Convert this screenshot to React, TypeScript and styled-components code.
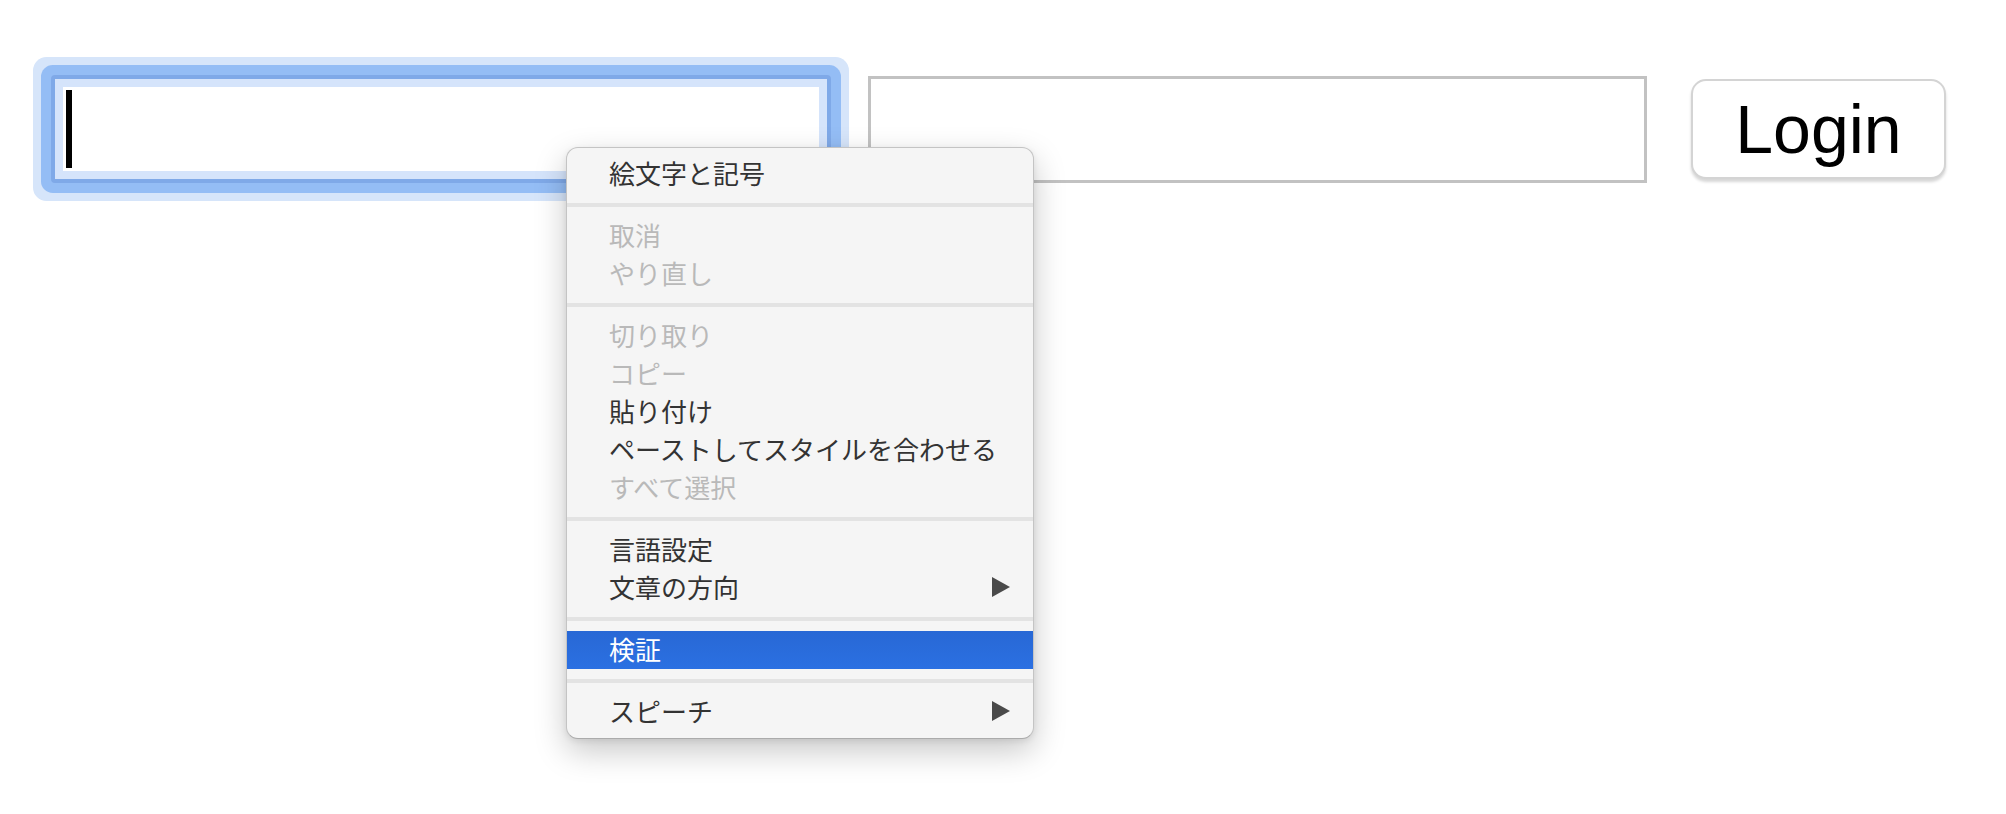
import React from "react";
import styled, { createGlobalStyle, css } from "styled-components";

const GlobalStyle = createGlobalStyle`
  html, body {
    margin: 0;
    padding: 0;
    background: #ffffff;
  }
  body {
    font-family: "Liberation Sans", Arial, sans-serif;
  }
`;

const Page = styled.div`
  position: relative;
  min-height: 814px;
  padding: 75px 0 0 51px;
  box-sizing: border-box;
`;

const FormRow = styled.div`
  display: flex;
  align-items: center;
`;

const Field = styled.div<{ $focused?: boolean }>`
  box-sizing: border-box;
  width: 780px;
  height: 108px;
  background: #ffffff;
  display: flex;
  align-items: center;
  padding: 3px;
  ${(p) =>
    p.$focused
      ? css`
          border: 4px solid #7fa9e8;
          border-radius: 4px;
          padding: 11px;
          box-shadow: inset 0 0 0 8px #d5e4fb, 0 0 0 10px #94bdf5,
            0 0 0 18px #d6e5fa;
        `
      : css`
          border: 3px solid #c2c2c2;
        `}
`;

const SecondField = styled(Field)`
  margin-left: 37px;
  width: 779px;
  height: 107px;
`;

const Caret = styled.span`
  display: block;
  width: 6px;
  height: 78px;
  background: #000000;
`;

const LoginButton = styled.button`
  box-sizing: border-box;
  margin-left: 44px;
  width: 255px;
  height: 100px;
  background: #ffffff;
  border: 2px solid #d4d4d4;
  border-radius: 15px;
  box-shadow: 0 3px 3px rgba(0, 0, 0, 0.16);
  font-family: "Liberation Sans", Arial, sans-serif;
  font-size: 68px;
  color: #000000;
  padding: 0;
  display: flex;
  align-items: center;
  justify-content: center;
  line-height: 1;
`;

const Menu = styled.div`
  position: absolute;
  left: 566px;
  top: 147px;
  width: 468px;
  box-sizing: border-box;
  padding: 7px 0;
  background: #f5f5f5;
  border: 1px solid rgba(0, 0, 0, 0.2);
  border-bottom-color: rgba(0, 0, 0, 0.3);
  border-radius: 12px;
  box-shadow: 0 12px 32px rgba(0, 0, 0, 0.22), 0 2px 6px rgba(0, 0, 0, 0.08);
  font-family: "Noto Sans CJK JP", "Noto Sans", sans-serif;
  font-size: 26px;
  overflow: hidden;
`;

const Item = styled.div<{ $disabled?: boolean; $active?: boolean }>`
  box-sizing: border-box;
  height: 38px;
  display: flex;
  align-items: center;
  justify-content: space-between;
  padding: 0 23px 2px 42px;
  line-height: 36px;
  color: ${(p) => (p.$active ? "#ffffff" : p.$disabled ? "#b9b9b9" : "#333333")};
  background: ${(p) =>
    p.$active ? "linear-gradient(#2868d5, #2b70e2)" : "transparent"};
  white-space: nowrap;
`;

const Separator = styled.div`
  height: 4px;
  margin: 10px 0;
  background: #e3e3e3;
`;

const SubArrow = () => (
  <svg width="18" height="20" viewBox="0 0 18 20" aria-hidden="true">
    <polygon points="0,0 18,10 0,20" fill="#4a4a4a" />
  </svg>
);

type Entry =
  | { kind: "sep" }
  | { kind: "item"; label: string; disabled?: boolean; active?: boolean; sub?: boolean };

const entries: Entry[] = [
  { kind: "item", label: "絵文字と記号" },
  { kind: "sep" },
  { kind: "item", label: "取消", disabled: true },
  { kind: "item", label: "やり直し", disabled: true },
  { kind: "sep" },
  { kind: "item", label: "切り取り", disabled: true },
  { kind: "item", label: "コピー", disabled: true },
  { kind: "item", label: "貼り付け" },
  { kind: "item", label: "ペーストしてスタイルを合わせる" },
  { kind: "item", label: "すべて選択", disabled: true },
  { kind: "sep" },
  { kind: "item", label: "言語設定" },
  { kind: "item", label: "文章の方向", sub: true },
  { kind: "sep" },
  { kind: "item", label: "検証", active: true },
  { kind: "sep" },
  { kind: "item", label: "スピーチ", sub: true },
];

export default function App() {
  return (
    <>
      <GlobalStyle />
      <Page>
        <FormRow>
          <Field $focused role="textbox">
            <Caret />
          </Field>
          <SecondField role="textbox" />
          <LoginButton type="button">Login</LoginButton>
        </FormRow>
        <Menu role="menu">
          {entries.map((e, i) =>
            e.kind === "sep" ? (
              <Separator key={i} />
            ) : (
              <Item key={i} $disabled={e.disabled} $active={e.active} role="menuitem">
                <span>{e.label}</span>
                {e.sub && <SubArrow />}
              </Item>
            )
          )}
        </Menu>
      </Page>
    </>
  );
}
